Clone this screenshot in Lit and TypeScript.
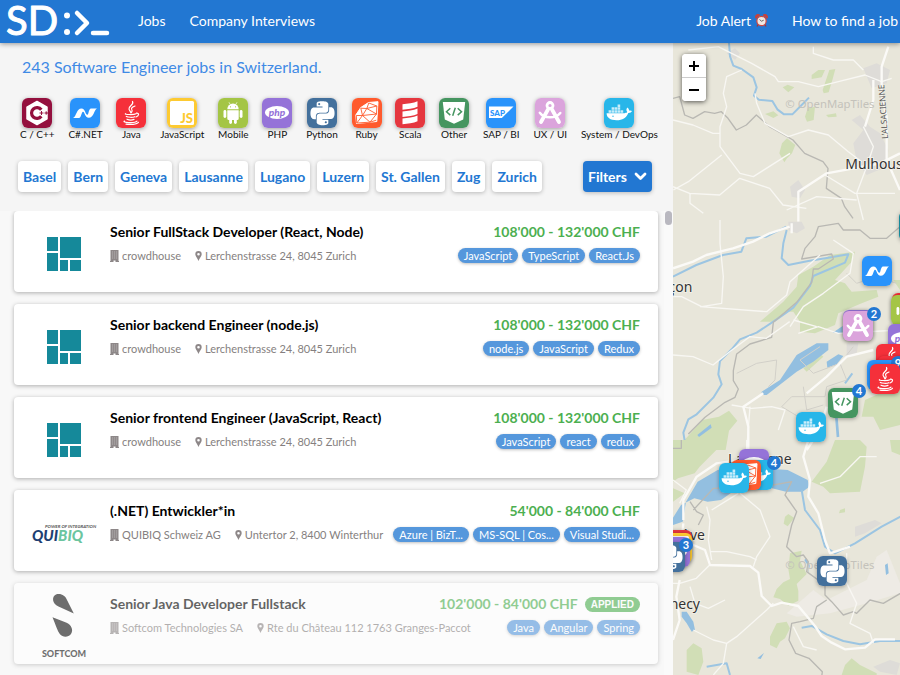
import { LitElement, html, svg, css, nothing } from "lit";
import { customElement, property } from "lit/decorators.js";
import { styleMap } from "lit/directives/style-map.js";

type Tech =
  | "cpp" | "net" | "java" | "js" | "android" | "php" | "python" | "ruby"
  | "scala" | "other" | "sap" | "ux" | "docker" | "blank";

const PYTHON =
  "M14.25.18l.9.2.73.26.59.3.45.32.34.34.25.34.16.33.1.3.04.26.02.2-.01.13V8.5l-.05.63-.13.55-.21.46-.26.38-.3.31-.33.25-.35.19-.35.14-.33.1-.3.07-.26.04-.21.02H8.77l-.69.05-.59.14-.5.22-.41.27-.33.32-.27.35-.2.36-.15.37-.1.35-.07.32-.04.27-.02.21v3.06H3.17l-.21-.03-.28-.07-.32-.12-.35-.18-.36-.26-.36-.36-.35-.46-.32-.59-.28-.73-.21-.88-.14-1.05-.05-1.23.06-1.22.16-1.04.24-.87.32-.71.36-.57.4-.44.42-.33.42-.24.4-.16.36-.1.32-.05.24-.01h.16l.06.01h8.16v-.83H6.18l-.01-2.75-.02-.37.05-.34.11-.31.17-.28.25-.26.31-.23.38-.2.44-.18.51-.15.58-.12.64-.1.71-.06.77-.04.84-.02 1.27.05zm-6.3 1.98l-.23.33-.08.41.08.41.23.34.33.22.41.09.41-.09.33-.22.23-.34.08-.41-.08-.41-.23-.33-.33-.22-.41-.09-.41.09zm13.09 3.95l.28.06.32.12.35.18.36.27.36.35.35.47.32.59.28.73.21.88.14 1.04.05 1.23-.06 1.23-.16 1.04-.24.86-.32.71-.36.57-.4.45-.42.33-.42.24-.4.16-.36.09-.32.05-.24.02-.16-.01h-8.22v.82h5.84l.01 2.76.02.36-.05.34-.11.31-.17.29-.25.25-.31.24-.38.2-.44.17-.51.15-.58.13-.64.09-.71.07-.77.04-.84.01-1.27-.04-1.07-.14-.9-.2-.73-.25-.59-.3-.45-.33-.34-.34-.25-.34-.16-.33-.1-.3-.04-.25-.02-.2.01-.13v-5.34l.05-.64.13-.54.21-.46.26-.38.3-.32.33-.24.35-.2.35-.14.33-.1.3-.06.26-.04.21-.02.13-.01h5.84l.69-.05.59-.14.5-.21.41-.28.33-.32.27-.35.2-.36.15-.36.1-.35.07-.32.04-.28.02-.21V6.07h2.09l.14.01zm-6.47 14.25l-.23.33-.08.41.08.41.23.33.33.23.41.08.41-.08.33-.23.23-.33.08-.41-.08-.41-.23-.33-.33-.23-.41-.08-.41.08z";

const TILE_COLORS: Record<Tech, string> = {
  cpp: "#94103e", net: "#2993fb", java: "#f5303a", js: "#fdca32", android: "#a4c545",
  php: "#9573d8", python: "#43709c", ruby: "#ff5a2d", scala: "#e5373f", other: "#459560",
  sap: "#2993fb", ux: "#dba4dc", docker: "#28b6e9", blank: "#15899a",
};

const GLYPHS: Record<Tech, unknown> = {
  cpp: svg`
    <path d="M15 3.5l10 5.7v11.6l-10 5.7-10-5.7V9.200z" fill="#fff" stroke="#fff" stroke-width="1.500" stroke-linejoin="round"/>
    <path d="M19.300 11.800a5.400 5.400 0 1 0 0 6.400" fill="none" stroke="#94103e" stroke-width="3.200"/>
    <path d="M17.500 15h4M19.500 13v4M22.500 15h3.500M24.200 13.300v3.400" stroke="#94103e" stroke-width="1"/>`,
  net: svg`
    <path d="M3 20c3.500-1.500 3.500-9.500 8.500-9.500 4 0 3.500 6.200 6 6.200 1.200 0 1.200-6.200 3.500-6.200h6c-3 1.500-3.200 9.300-8.200 9.300-4.200 0-3.800-6-5.800-6-1.500 0-1.700 6.200-4 6.200z" fill="#fff"/>`,
  java: svg`
    <g fill="none" stroke="#fff" stroke-width="1.200" stroke-linecap="round">
      <path d="M16.500 3.500c2 3-4.200 4.500-3.500 7.500.3 1.500 1.800 2.500 1.800 3.800"/>
      <path d="M19 8c-2.500.8-4 2-3.300 3.300.6 1 1 2-.3 3.200"/>
      <path d="M9.500 15.700c-1.500.8 8 1.400 10.500 0M10.300 18.500c1.800 1 6.800 1 8.500.2M11 21.200c1.800.8 5.500.8 7 .2"/>
      <path d="M20.500 15.200c2.800-.4 2.800 2.700-.5 3.800M8.500 23c-3.200 1.500 10 2.700 12.500.2M22.500 24.300c-1.200 2.200-9 2.500-12.500 1.800"/>
    </g>`,
  js: svg`
    <rect x="3" y="3" width="24" height="24" rx="1.500" fill="#fff"/>
    <text x="26" y="25" text-anchor="end" font-family="Lato, sans-serif" font-weight="900" font-size="13" fill="#fdca32">JS</text>`,
  android: svg`
    <g fill="#fff">
      <path d="M9.300 11.300a5.700 5.700 0 0 1 11.400 0z"/>
      <path d="M9.300 12.200h11.400v8.300a1.500 1.500 0 0 1-1.500 1.500h-8.400a1.500 1.500 0 0 1-1.500-1.500z"/>
      <rect x="5.500" y="12" width="2.800" height="8" rx="1.400"/><rect x="21.700" y="12" width="2.800" height="8" rx="1.400"/>
      <rect x="11.200" y="19" width="2.800" height="7" rx="1.400"/><rect x="16" y="19" width="2.800" height="7" rx="1.400"/>
    </g>
    <path d="M11 4.300l1.500 2.500M19 4.300l-1.500 2.500" stroke="#fff" stroke-width=".7"/>
    <circle cx="12.500" cy="8.800" r=".6" fill="#a4c545"/><circle cx="17.500" cy="8.800" r=".6" fill="#a4c545"/>`,
  php: svg`
    <ellipse cx="15" cy="14.500" rx="12" ry="6.500" fill="#fff"/>
    <text x="15" y="17.500" text-anchor="middle" font-family="Lato, sans-serif" font-style="italic" font-weight="900" font-size="10" fill="#9573d8">php</text>`,
  python: svg`<path transform="translate(3.500 3.200)" d="${PYTHON}" fill="#fff"/>`,
  ruby: svg`
    <path d="M16.500 4.500l9.500-.8-1.200 19.800L4.500 25.500 3.800 17l5-7.500z" fill="#fff" stroke="#fff" stroke-linejoin="round"/>
    <g fill="none" stroke="#ff5a2d" stroke-width=".9">
      <path d="M8.800 10.200l6 .3 9.700 5.500-14 1.500zM14.800 10.500l2-5.500 8 3-10 2.500M24.500 16l.3-8M14.800 10.500l-4.300 7L4.800 25l-.5-7.500 6.200 0 7.500 6.700 6.500-8.200M4.800 25l13.200-.8M18 24.200l6.200-2"/>
    </g>`,
  scala: svg`
    <path d="M7.500 6.200c5-.8 11-1 15-3v5.600c-4 2-10 2.200-15 3zM7.500 13.400c5-.8 11-1 15-3V16c-4 2-10 2.200-15 3zM7.500 20.600c5-.8 11-1 15-3v5.600c-4 2-10 2.200-15 3z" fill="#fff"/>`,
  other: svg`
    <path d="M3.800 4h22.400l-2 17.500-9.200 4.300-9.200-4.300z" fill="#fff"/>
    <path d="M11.300 10.300l-3.800 3.400 3.800 3.400M18.700 10.300l3.800 3.400-3.800 3.400M16.300 9.700l-2.600 8" fill="none" stroke="#459560" stroke-width="1.500"/>`,
  sap: svg`
    <path d="M3 8.500h24.500L15.800 20H3z" fill="#fff"/>
    <text x="4" y="17.500" font-family="Lato, sans-serif" font-weight="900" font-size="8" fill="#2993fb">SAP</text>`,
  ux: svg`
    <g fill="none" stroke="#fff" stroke-linecap="round">
      <circle cx="15" cy="7.500" r="3" stroke-width="2.800"/>
      <path d="M13 11.500L6 24M17 11.500L24 24" stroke-width="3.800"/>
      <path d="M4.800 14.800c4.200 5.800 15.500 6.300 20.500.2" stroke-width="2.500"/>
    </g>`,
  docker: svg`
    <path d="M2.600 15.300h17.800c1.400 0 2.300-.4 2.800-1.200-1.200-1.500-.9-3.400.2-4.500 1.200.8 1.700 1.900 1.600 3 1-.3 2.200-.2 3 .4-.6 1.400-1.900 2-3.700 1.900-2 4.800-5.700 7.300-11.700 7.300-6.500 0-10-2.500-10-6.900z" fill="#fff"/>
    <g fill="#fff" fill-opacity=".75">
      <path d="M4.600 12.200h2.600v2.500H4.600zM7.600 12.200h2.600v2.500H7.600zM10.600 12.200h2.600v2.500h-2.600zM13.600 12.200h2.600v2.500h-2.600zM16.600 12.200h2.600v2.500h-2.600zM7.600 9.300h2.600v2.500H7.600zM10.600 9.300h2.600v2.500h-2.600zM13.600 9.300h2.600v2.500h-2.600zM13.600 6.400h2.600v2.500h-2.600z"/>
    </g>
    <circle cx="9" cy="18.300" r=".7" fill="#28b6e9"/>`,
  blank: nothing,
};

@customElement("tech-tile")
class TechTile extends LitElement {
  @property() name: Tech = "blank";
  static styles = css`
    :host { display: block; width: 30px; height: 30px; }
    svg { display: block; width: 30px; height: 30px; border-radius: 6px; box-shadow: 0 1px 4px rgba(0, 0, 0, 0.35); }
  `;
  render() {
    return html`<svg viewBox="0 0 30 30" aria-hidden="true">
      <rect width="30" height="30" fill=${TILE_COLORS[this.name]} />${GLYPHS[this.name]}
    </svg>`;
  }
}

const TECHS: [Tech, string][] = [
  ["cpp", "C / C++"], ["net", "C#.NET"], ["java", "Java"], ["js", "JavaScript"],
  ["android", "Mobile"], ["php", "PHP"], ["python", "Python"], ["ruby", "Ruby"],
  ["scala", "Scala"], ["other", "Other"], ["sap", "SAP / BI"], ["ux", "UX / UI"],
  ["docker", "System / DevOps"],
];

const CITIES = ["Basel", "Bern", "Geneva", "Lausanne", "Lugano", "Luzern", "St. Gallen", "Zug", "Zurich"];

interface Job {
  title: string; company: string; address: string; salary: string;
  tags: string[]; logo: "crowdhouse" | "quibiq" | "softcom"; applied?: boolean;
}

const ZURICH = "Lerchenstrasse 24, 8045 Zurich";
const JOBS: Job[] = [
  { title: "Senior FullStack Developer (React, Node)", company: "crowdhouse", address: ZURICH, salary: "108'000 - 132'000 CHF", tags: ["JavaScript", "TypeScript", "React.Js"], logo: "crowdhouse" },
  { title: "Senior backend Engineer (node.js)", company: "crowdhouse", address: ZURICH, salary: "108'000 - 132'000 CHF", tags: ["node.js", "JavaScript", "Redux"], logo: "crowdhouse" },
  { title: "Senior frontend Engineer (JavaScript, React)", company: "crowdhouse", address: ZURICH, salary: "108'000 - 132'000 CHF", tags: ["JavaScript", "react", "redux"], logo: "crowdhouse" },
  { title: "(.NET) Entwickler*in", company: "QUIBIQ Schweiz AG", address: "Untertor 2, 8400 Winterthur", salary: "54'000 - 84'000 CHF", tags: ["Azure | BizT...", "MS-SQL | Cos...", "Visual Studi..."], logo: "quibiq" },
  { title: "Senior Java Developer Fullstack", company: "Softcom Technologies SA", address: "Rte du Château 112 1763 Granges-Paccot", salary: "102'000 - 84'000 CHF", tags: ["Java", "Angular", "Spring"], logo: "softcom", applied: true },
];

const LOGOS = {
  crowdhouse: svg`<svg width="34" height="34" viewBox="0 0 34 34" role="img" aria-label="crowdhouse">
    <path d="M0 0h11v14H0zM13 0h21v21H13zM0 16h11v18H0zM13 23h8v11h-8zM23 23h11v11H23z" fill="#15899a"/></svg>`,
  quibiq: svg`<svg class="wide" width="66" height="20" viewBox="0 0 66 20" role="img" aria-label="QUIBIQ">
    <text x="14" y="5" font-family="Lato, sans-serif" font-style="italic" font-weight="700" font-size="4.500" fill="#555">POWER OF INTEGRATION</text>
    <text x="1" y="18" font-family="Lato, sans-serif" font-style="italic" font-weight="900" font-size="15" fill="#1e3f73">QUI<tspan fill="#6cc5a0">BIQ</tspan></text></svg>`,
  softcom: svg`<svg width="50" height="66" viewBox="0 0 50 66" role="img" aria-label="Softcom">
    <path d="M17 1.500C22 0 26.500 3 28 7L34.800 20.500 19.500 13.500C13 10.500 12.500 3.500 17 1.500zM13.500 24.300l13.500 5.200c6 2.500 7.500 8 5 11.500-3 3.500-8 3.500-11.200 0-2.500-3.500-3.500-7.500-7.300-16.700z" fill="#111"/>
    <text x="25" y="64" text-anchor="middle" font-family="Lato, sans-serif" font-weight="900" font-size="9" fill="#111">SOFTCOM</text></svg>`,
};

const BUILDING = svg`<svg class="ic" width="9" height="12" viewBox="0 0 9 12" aria-hidden="true">
  <path d="M.5 0h8v11h.5v1H5.500v-1.500h-2V12H0v-1h.5z" fill="#8d8788"/>
  <path d="M2 2h1.200M4 2h1.200M6 2h1.200M2 4h1.200M4 4h1.200M6 4h1.200M2 6h1.200M4 6h1.200M6 6h1.200M2 8h1.200M4 8h1.200M6 8h1.200" stroke="#c2bfbf" stroke-width=".8"/></svg>`;
const PIN = svg`<svg class="ic" width="7" height="10" viewBox="0 0 7 10" aria-hidden="true">
  <path fill-rule="evenodd" d="M3.500 0A3.200 3.200 0 0 1 6.700 3.200C6.700 5 4.500 7 3.500 10 2.500 7 .3 5 .3 3.200A3.200 3.200 0 0 1 3.500 0zm0 1.900a1.300 1.300 0 1 0 0 2.600 1.300 1.300 0 0 0 0-2.600z" fill="#8d8788"/></svg>`;

@customElement("job-card")
class JobCard extends LitElement {
  @property({ attribute: false }) job!: Job;
  static styles = css`
    :host { display: block; }
    .card { display: flex; height: 81px; background: #fff; border-radius: 4px; box-shadow: 0 1px 4px rgba(0, 0, 0, 0.3); }
    .applied { opacity: 0.6; }
    .logo { flex: 0 0 68px; padding: 4px 12px 0 16px; display: flex; align-items: center; justify-content: center; }
    .wide { overflow: visible; }
    .body { flex: 1; min-width: 0; padding: 12px 18px 0 0; display: flex; flex-direction: column; gap: 7px; }
    .row { display: flex; justify-content: space-between; align-items: center; white-space: nowrap; }
    .title { color: #000; font-size: 14px; line-height: 18px; font-weight: 700; text-decoration: none; }
    .salary { display: flex; align-items: center; gap: 7px; color: #4caf50; font-size: 14px; line-height: 18px; font-weight: 700; }
    .badge { background: #4caf50; color: #fff; font-size: 10px; line-height: 15px; padding: 0 6px; border-radius: 8px; font-family: "Liberation Sans", Arial, sans-serif; }
    .meta { display: flex; align-items: center; color: #857f80; font-size: 11px; line-height: 15px; gap: 14px; }
    .meta span { display: flex; align-items: center; gap: 3px; }
    .tags { display: flex; gap: 4px; list-style: none; margin: 0; padding: 0; }
    .tags li { background: #5597dc; color: #fff; font-size: 11px; line-height: 15px; padding: 0 6px; border-radius: 8px; box-shadow: 0 1px 3px rgba(0, 0, 0, 0.25); }
  `;
  render() {
    const j = this.job;
    return html`<article class="card ${j.applied ? "applied" : ""}">
      <div class="logo">${LOGOS[j.logo]}</div>
      <div class="body">
        <div class="row">
          <a class="title" href="#job">${j.title}</a>
          <span class="salary">${j.salary}${j.applied ? html`<span class="badge">APPLIED</span>` : nothing}</span>
        </div>
        <div class="row">
          <div class="meta"><span>${BUILDING}${j.company}</span><span>${PIN}${j.address}</span></div>
          <ul class="tags">${j.tags.map((t) => html`<li>${t}</li>`)}</ul>
        </div>
      </div>
    </article>`;
  }
}

interface Marker { tech: Tech; x: number; y: number; count?: number; }
// Offsets from the top left corner of the map pane.
const MARKERS: Marker[] = [
  { tech: "blank", x: 226, y: 168 },
  { tech: "net", x: 189, y: 213 },
  { tech: "java", x: 219, y: 250 },
  { tech: "android", x: 218, y: 252 },
  { tech: "php", x: 215, y: 281 },
  { tech: "php", x: 170, y: 267 },
  { tech: "ux", x: 170, y: 268, count: 2 },
  { tech: "java", x: 203, y: 301 },
  { tech: "java", x: 205, y: 313 },
  { tech: "net", x: 194, y: 317, count: 9 },
  { tech: "java", x: 197, y: 321 },
  { tech: "other", x: 155, y: 345, count: 4 },
  { tech: "docker", x: 123, y: 369 },
  { tech: "php", x: 66, y: 406 },
  { tech: "docker", x: 70, y: 417, count: 4 },
  { tech: "ruby", x: 58, y: 417 },
  { tech: "docker", x: 46, y: 420 },
  { tech: "scala", x: -11, y: 487 },
  { tech: "js", x: -11, y: 490 },
  { tech: "php", x: -13, y: 494 },
  { tech: "python", x: -18, y: 499, count: 3 },
  { tech: "python", x: 144, y: 513 },
];

@customElement("job-map")
class JobMap extends LitElement {
  static styles = css`
    :host { display: block; position: relative; overflow: hidden; background: #e8e6da; }
    .tiles { display: block; width: 100%; height: 100%; }
    .zoom { position: absolute; left: 9px; top: 11px; width: 24px; border-radius: 4px; background: #fff; box-shadow: 0 1px 5px rgba(0, 0, 0, 0.65); overflow: hidden; }
    .zoom button { display: flex; align-items: center; justify-content: center; width: 24px; height: 23px; border: 0; padding: 0; background: #fff; }
    .zoom button + button { border-top: 1px solid #ccc; height: 24px; }
    .marker { position: absolute; border: 0; padding: 0; background: none; }
    .count { position: absolute; top: -4px; right: -8px; width: 14px; height: 14px; border-radius: 7px; background: #2277d2; color: #fff; font: 700 11px/14px Lato, sans-serif; text-align: center; }
    .land { fill: #d1deb6; }
    .urban { fill: #dedcd8; }
    .lake { fill: #93bfe0; }
    .river { fill: none; stroke: #9cc5e2; stroke-width: 6; stroke-linejoin: round; }
    .border { fill: none; stroke: #b9b8b3; stroke-width: 4; stroke-linejoin: round; }
    .thin { fill: none; stroke: #d2d0c9; stroke-width: 3; stroke-linejoin: round; }
    .road { fill: none; stroke: #f8f7f3; stroke-width: 4; stroke-linejoin: round; }
    .main { fill: none; stroke: #fbfaf7; stroke-width: 7; stroke-linejoin: round; }
    .place { font: 42px "Noto Sans", sans-serif; fill: #333; stroke: #f4f2ea; stroke-width: 5; paint-order: stroke; }
    .mark { font: 34px "Noto Sans", sans-serif; fill: #c4c2bb; }
    .street { font: 25px "Noto Sans", sans-serif; fill: #555; }
  `;
  render() {
    return html`
      <svg class="tiles" aria-label="Map">
        <g transform="scale(.33333) translate(-39 -129)">
          <path class="urban" d="M610 205l40-15 40 20-10 40-45 15zM580 430l30-40-35-30 25-15 30 35 30 20 25 50-5 50-60 25-30-40zM390 560l25-20 20 30-15 25-25-5zM200 160l25-15 15 15-15 20z"/>
          <path class="land" d="M455 225l20-15 20 0-10 22-30 5zM488 270l20-60 18-3-8 30-12 40-15 3zM368 262l15-8 20 8-18 15zM315 342l25-8 15 12-15 8zM435 350l8-25 22-5-4 40-20 5zM498 345l30-5 2 10-25 2zM358 460l8-30 15-15 25 20-10 25-15 15-8 12z"/>
          <path class="river" d="M207 129l3 40 10 28 25 10 35 25 10 30-8 25 15 12 40 4 15 25 20 15 25 0 25-25 25-25"/>
          <path class="border" d="M39 295l20-5 15 55 25 10 35-20 30 5 20-5 20 20 25 35 30-15 30-30 40 35 70 40 35 40 55 25 15 20-5 60 45 30 10 25 25 35"/>
          <path class="road" d="M85 150l90-10 40 20 60 30 70 40 10 15 60 0 60 15 60-15 80-20 50 20 30-10M460 140v20l60 20 60 0 30 30M245 210l-45 20-10 50 10 40-20 60 0 60 60 80 40 10 110-70M39 360l60 15 60 25 20 0M185 465l-100 80-45 25M39 560l50 20 90 5 60-50 90 30 40 50 70 10M285 280l5 30 25 60 70 40 60-20 60 15 60 50 40 30M90 580v30l40 30M495 525l90 55 120 0M610 380l30 60-20 60-30 80 20 80M380 630l90-40 120 10"/>
          <path class="main" d="M685 140l-20 60 0 90 15 60 0 130 40 90M640 240l0 60-25 80M720 460l-60 30-160 30-85 55 0 90"/>
          <text class="place" x="556" y="507">Mulhouse</text>
          <text class="street" transform="translate(684 416) rotate(-94)">L'ALSACIENNE</text>
          <text class="mark" x="376" y="325">© OpenMapTiles</text>
        </g>
        <g transform="scale(.33333) translate(-39 531)">
          <path class="urban" d="M385 5l40 0 10 20-25 15-25-10zM560 370l35 0-5 30-30 10z"/>
          <path class="land" d="M510 105l75-10-10 30-50 55 30 10 20 25 75-5 5 20-50 20-70 30-10 35-60 25-45-5 0-30-20-30-25 0-30 30-45 0 70-60 40-45 5-35 45-25zM430 445l55-40 5 5-50 45zM47 690l80-90 50-10 30-18 25 30-25 30-10 58zM660 520l60-30v125l-60 15-20-40-35 0 10-50zM700 180l20 0 0 30z"/>
          <path class="lake" d="M305 515l55-35 50-75 60-35 35 0 0 20-45 35-50 30-90 70-15 0zM500 425l35-22 15 5-20 25-28 10zM518 338l30-20 0 22zM112 645l40-32 3 10-38 28zM525 590h8l5 60-8 2z"/>
          <path class="river" d="M39 170l70-35 80-30 55-10 15-40 60-5 60-30M380 30l-10 40-5 45 20 20 60-12 60-10 60-10-10 25-60 25-35 15-10 30-50 65-50 35-60 40-50 20-25 30-35 35-5 40 10 30-25 40-50 50-25 15-15 40 5 30M555 490l22-30"/>
          <path class="border" d="M720 20l-40 35-50 0-30-25-50 0-15-20-60 10-10 30-30 35-10 32 90-15 5 15-45 30-15 0-5 40-45 60-70 60-5 45-65 20-40 30-10 50 0 30 15 25-10 25-30 15-60 45-50 50"/>
          <path class="thin" d="M230 460l60-30 60-10-5 60-20 20M480 380l-60 40 40 40 80-30 40-50M540 430l20 50-60 20-5 30-100 0-30 30 50 30M560 160l30 30 60-20 60 20M430 500l10 70 50-15"/>
          <path class="road" d="M180 0l0 70 10 100-5 80-60 10-60-30-25 0M120 260l200 15 60-50 10-40 90-80M39 405l60 5 60 25 50-40 60-45 50 5 70-50M215 555l60 10 60-5 40 10-20 60M520 60l60 40-10 60-80 60-60 40-40 60M415 340l60-20 60 20 185-10M270 560l-10 130M400 300l70 20"/>
          <path class="main" d="M39 145l60-20 40-20 80-20 60-20 50-25 60-20M395 10l0 30M440 520l60-50 60-60 80-20M310 520l-60 40 15 60 0 70M440 690l40-60 20-70"/>
          <text class="place" x="97" y="217" text-anchor="end">Besançon</text>
        </g>
        <g transform="scale(.33333) translate(-39 1191)">
          <path class="urban" d="M585 260l60-20 20 10-50 30-30 10zM640 680l50-20 30 10-10 35-50-10z"/>
          <path d="M380 520l80-70 40 30 120-60 30-70 30-20 40 100v30l-100 30-110 30-100 10z" fill="#eeebe5"/>
          <path class="land" d="M39 0l150 0-20 30-50 50-15 20-50 15-15 10zM39 145l35 15-35 25zM455 125l45-60 25-65 75 0 20 20-5 60-15 75-90 5-20-20zM690 0h30v45l-25-10zM375 230l10-8 18 12-20 25-12-8zM540 210l15-5 0 12-18 3zM390 340l35-8-5 30 10 20 10 20-30 30 5 20 0 30-30 15-25-20-20-5 10-25 20-20 20-10-5-30zM330 590l20-40 30-5 10 20-15 30-15 10-10 20-20-10zM545 705l10-30 20-20 25 20 50 25 0 5zM80 630l20-20 25 15 5 40-15 40-35-10z"/>
          <path class="lake" d="M68 245l10-60 35-60 60-35 70-10 140 10 60 30 5 20-20 15-50 0-80-20-65 10-50 35-40 5-40-10-40 20-25 40-15 25zM65 515l15 0 20 30 5 25-10 5-15-25-15-20zM292 655l20-16-10 18zM675 375l8-5 3 30-8 5zM433 360l6-5 10 20 0 10z"/>
          <path class="river" d="M425 150l10 60 45 60 15 50 30 20 60-30 80-50 65-35M425 563l30-5 45 25 50 20 50 10 60-10 60 0M140 680l60-10 10 35"/>
          <path class="border" d="M39 25l25 0 0-25M90 185l20 30 20 10-15 30M100 210l60-65 180-10 55-10-20 40 35 50-15 40-15 65 30 30 20-5 15 20-5 30 55 40 0 30 20 20 35 40 30-10 10 5 40-40 40 10 60-35M500 480l-30 20-10 35-40 10-25 5-8 50 20 40 40 15 40 40-5 40"/>
          <path class="road" d="M140 200l10 40-5 60 10 60M240 160l60 50 30 80-40 60-10 30M155 210l80-50M150 335l50 0 70 15 20 10M39 430l20 0 50-15 40-40M90 440l15 50 40 15 50-25M340 490l-20 20-90 80-30 20-40-10-60-30M200 610l-10 60-30 35M480 130l60-20 60-60 50 0M560 340l0 90 30 60-20 60 60 30 10 30M400 560l30 60 40 10M39 120l40 30-20 40"/>
          <path class="main" d="M445 0l-15 50 20 70-5 50 30 50 20 80 15 40 60-20M70 250l-5 50 70 30 15 45 120 3 25 20 10 70 30 30 30-10 50 10 50 60 20 30 30 20 40 20 60-5 30-25 60 0M39 600l20-60-10-70 10-50M70 240l0-60 40-70 60-40 70-10"/>
          <path class="main" d="M262 0v40"/>
          <text class="place" x="395" y="72" text-anchor="end">Lausanne</text>
          <text class="place" x="135" y="300" text-anchor="end">Genève</text>
          <text class="place" x="120" y="507" text-anchor="end">Annecy</text>
          <text class="mark" x="376" y="387">© OpenMapTiles</text>
        </g>
      </svg>
      ${MARKERS.map((m) => html`<button class="marker" style=${styleMap({ left: `${m.x}px`, top: `${m.y}px` })}>
        <tech-tile name=${m.tech}></tech-tile>${m.count ? html`<span class="count">${m.count}</span>` : nothing}
      </button>`)}
      <div class="zoom">
        <button aria-label="Zoom in"><svg width="10" height="10"><path d="M0 5h10M5 0v10" stroke="#000" stroke-width="2"/></svg></button>
        <button aria-label="Zoom out"><svg width="10" height="10"><path d="M0 5h10" stroke="#000" stroke-width="2"/></svg></button>
      </div>`;
  }
}

@customElement("app-root")
class AppRoot extends LitElement {
  static styles = css`
    :host { display: flex; flex-direction: column; height: 100vh; overflow: hidden; background: #f5f5f5; font-family: Lato, "Noto Sans", sans-serif; }
    header { position: relative; z-index: 1; flex: none; height: 43px; display: flex; align-items: center; background: #2277d2; box-shadow: 0 1px 5px rgba(0, 0, 0, 0.4); white-space: nowrap; }
    .brand { display: block; margin: 0 28px 0 6px; height: 36px; }
    .brand svg { overflow: visible; }
    nav { display: flex; align-items: center; gap: 24px; padding-bottom: 2px; }
    nav a { display: flex; align-items: center; gap: 4px; color: #fff; font-size: 14px; line-height: 20px; text-decoration: none; }
    .end { margin-left: auto; padding-right: 2px; }
    main { flex: 1; min-height: 0; display: flex; }
    .side { flex: 0 0 calc(75% - 2px); min-width: 0; display: flex; flex-direction: column; }
    h1 { margin: 0; padding: 12px 22px 0; font-size: 16px; line-height: 24px; font-weight: 400; color: #3f8ae5; }
    .techs { display: flex; padding: 19px 15px 0 20px; justify-content: space-between; white-space: nowrap; }
    .techs button { display: flex; flex-direction: column; align-items: center; border: 0; padding: 0; background: none; font: 10px/12px Lato, sans-serif; color: #111; }
    .cities { display: flex; gap: 7px; padding: 21px 21px 0 18px; }
    .cities button { height: 31px; padding: 0 5px; border: 0; border-radius: 4px; background: #fff; color: #2277d2; font: 700 14px/20px Lato, sans-serif; box-shadow: 0 1px 4px rgba(0, 0, 0, 0.25); }
    .cities .filters { display: flex; align-items: center; justify-content: space-between; width: 69px; margin-left: auto; background: #2277d2; color: #fff; }
    .results { flex: 1; min-height: 0; display: flex; margin-top: 19px; overflow: hidden; background: #f8f8f8; }
    .list { flex: 1; min-width: 0; display: flex; flex-direction: column; gap: 12px; padding: 0 6px 0 14px; }
    .track { flex: 0 0 9px; background: #fafafa; }
    .thumb { width: 7px; height: 14px; margin-left: 1px; border-radius: 4px; background: #b9b8c0; }
    job-map { flex: 1; }
  `;
  render() {
    return html`
      <header>
        <a class="brand" href="#home" aria-label="SD home">
          <svg width="104" height="36" viewBox="0 0 104 36">
            <text x="0" y="31" font-family="Lato, sans-serif" font-size="40" fill="#fff" stroke="#fff" stroke-width="1" stroke-linejoin="round">SD</text>
            <g fill="none" stroke="#fff" stroke-width="4.500" stroke-linecap="round" stroke-linejoin="round">
              <path d="M71 9l10 10-10 10"/><path d="M87 29h14"/>
            </g>
            <circle cx="61" cy="11.500" r="3" fill="#fff"/><circle cx="61" cy="28" r="3" fill="#fff"/>
          </svg>
        </a>
        <nav><a href="#jobs">Jobs</a><a href="#interviews">Company Interviews</a></nav>
        <nav class="end">
          <a href="#alert">Job Alert
            <svg width="13" height="13" viewBox="0 0 13 13" aria-hidden="true">
              <path d="M1 4.500A2.500 2.500 0 0 1 5 1.300M12 4.500A2.500 2.500 0 0 0 8 1.300" fill="#c9413a" stroke="#c9413a"/>
              <path d="M3 10.500l-1 2M10 10.500l1 2" stroke="#a33" stroke-width="1.200"/>
              <circle cx="6.500" cy="7" r="4.700" fill="#efe9e4" stroke="#cf4a42" stroke-width="1.300"/>
              <path d="M4.500 5.500l2 1.700 2.200-1" fill="none" stroke="#444" stroke-width=".8"/>
            </svg></a>
          <a href="#guide">How to find a job</a>
        </nav>
      </header>
      <main>
        <section class="side">
          <h1>243 Software Engineer jobs in Switzerland.</h1>
          <div class="techs">${TECHS.map(([k, label]) => html`<button><tech-tile name=${k}></tech-tile>${label}</button>`)}</div>
          <div class="cities">
            ${CITIES.map((c) => html`<button>${c}</button>`)}
            <button class="filters">Filters
              <svg width="13" height="9" viewBox="0 0 13 9" aria-hidden="true"><path d="M2 2l4.500 4.500L11 2" fill="none" stroke="#fff" stroke-width="2.800" stroke-linecap="round" stroke-linejoin="round"/></svg>
            </button>
          </div>
          <div class="results">
            <div class="list">${JOBS.map((j) => html`<job-card .job=${j}></job-card>`)}</div>
            <div class="track"><div class="thumb"></div></div>
          </div>
        </section>
        <job-map></job-map>
      </main>`;
  }
}
